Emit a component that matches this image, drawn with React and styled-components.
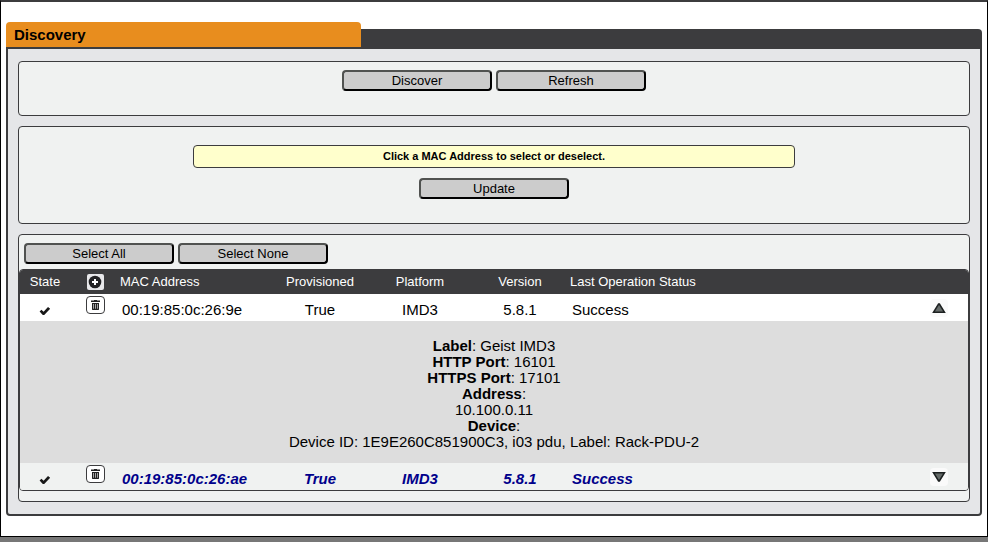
import React, { useState } from "react";
import styled, { createGlobalStyle } from "styled-components";

const ink = "#3c3c3e";

const GlobalStyle = createGlobalStyle`
  *, *::before, *::after { box-sizing: border-box; }
  body {
    margin: 0;
    background: #777;
    color: #000;
    font-family: "Liberation Sans", Arial, Helvetica, sans-serif;
    font-size: 15px;
    line-height: 16px;
  }
`;

const Page = styled.div`
  padding: 20px 5px;
  background: #fff;
  border: 1px solid #000;
  border-top: 2px solid ${ink};
`;

const PanelHeader = styled.header`
  display: flex;
  align-items: flex-end;
`;

const PanelTitle = styled.h1`
  flex: 0 0 355px;
  margin: 0;
  padding: 5px 8px 4px;
  background: #e88d1e;
  border-radius: 4px 4px 0 0;
  font-size: 15px;
  line-height: 16px;
  font-weight: bold;
`;

const PanelBar = styled.div`
  flex: 1;
  height: 18px;
  background: ${ink};
  border-top-right-radius: 4px;
`;

const PanelBody = styled.main`
  display: flex;
  flex-direction: column;
  gap: 10px;
  padding: 12px 10px;
  background: #e5e6e8;
  border: 2px solid ${ink};
  border-radius: 0 0 4px 4px;
`;

const Card = styled.section`
  display: flex;
  flex-direction: column;
  align-items: center;
  gap: 10px;
  padding: ${(p) => p.$top}px 0 24px;
  background: #f0f2f1;
  border: 1px solid ${ink};
  border-radius: 4px;
`;

const TableCard = styled(Card)`
  align-items: stretch;
  gap: 5px;
  padding-bottom: 10px;
`;

const Toolbar = styled.div`
  display: flex;
  gap: 4px;
  padding: 0 5px;
`;

const ActionButton = styled.button`
  width: 150px;
  height: 21px;
  padding: 0;
  background: #ccc;
  border: 2px solid;
  border-color: #505250 #000 #000 #505250;
  border-radius: 4px;
  color: #000;
  font: 13px/16px "Liberation Sans", Arial, sans-serif;
  cursor: pointer;
`;

const Hint = styled.p`
  width: 602px;
  max-width: 100%;
  margin: 0;
  padding: 3px 8px 4px;
  background: #ffffcc;
  border: 1px solid ${ink};
  border-radius: 4px;
  font-size: 11px;
  line-height: 14px;
  font-weight: bold;
  text-align: center;
`;

const TableFrame = styled.div`
  overflow: hidden;
  border: 1px solid ${ink};
  border-radius: 4px;
`;

const Table = styled.table`
  width: 100%;
  table-layout: fixed;
  border-collapse: collapse;
`;

const Column = styled.col`
  width: ${(p) => (p.$width ? `${p.$width}px` : "auto")};
`;

const HeadCell = styled.th`
  height: 24px;
  padding: 0;
  background: ${ink};
  color: #fff;
  font-size: 13px;
  line-height: 16px;
  font-weight: normal;
  text-align: ${(p) => (p.$left ? "left" : "center")};
  vertical-align: middle;
`;

const DeviceRow = styled.tr`
  background: ${(p) => (p.$selected ? "#f0f2f1" : "#fff")};
  color: ${(p) => (p.$selected ? "#00008b" : "#000")};
  font-style: ${(p) => (p.$selected ? "italic" : "normal")};
  font-weight: ${(p) => (p.$selected ? "bold" : "normal")};
`;

const Cell = styled.td`
  height: 27px;
  padding: 8px 0 3px ${(p) => (p.$left ? 2 : 0)}px;
  text-align: ${(p) => (p.$left ? "left" : "center")};
  vertical-align: top;
`;

const IconCell = styled(Cell)`
  padding: ${(p) => p.$top}px 0 0;
`;

const MacButton = styled.button`
  display: block;
  padding: 0;
  background: none;
  border: 0;
  color: inherit;
  font: inherit;
  cursor: pointer;
`;

const IconButton = styled.button`
  display: flex;
  align-items: center;
  justify-content: center;
  width: ${(p) => p.$width || 18}px;
  height: 18px;
  margin: 0 auto;
  padding: 0;
  background: ${(p) => p.$bg};
  border: ${(p) => (p.$outlined ? `1px solid ${ink}` : "0")};
  border-radius: 4px;
  cursor: pointer;
`;

const AddButton = styled(IconButton)`
  height: 16px;
  border-radius: 2px;
`;

const Glyph = styled.svg`
  display: block;
`;

const CheckGlyph = styled(Glyph)`
  margin: 0 auto;
`;

const DetailCell = styled.td`
  padding: 17px 8px 13px;
  background: #ddd;
  text-align: center;
`;

const DetailLine = styled.div`
  line-height: 16px;
`;

const CheckIcon = () => (
  <CheckGlyph width="12" height="10" viewBox="0 0 12 10" aria-label="Ready">
    <path d="M0.6 5.4 L2.4 3.8 L4.6 5.8 L9 0.9 L11.2 2.7 L5.2 8.9 L3.8 8.9 Z" fill="#181818" />
  </CheckGlyph>
);

const PlusIcon = () => (
  <Glyph width="14" height="14" viewBox="0 0 14 14">
    <circle cx="7" cy="7" r="6.3" fill="#222224" />
    <path d="M6 4h2v2h2v2H8v2H6V8H4V6h2z" fill="#fff" />
  </Glyph>
);

const TrashIcon = () => (
  <Glyph width="9" height="12" viewBox="0 0 9 12">
    <path d="M3 1.5V1h3v0.5h3V3H0V1.5z" fill="#222" />
    <path
      fillRule="evenodd"
      d="M1 4h7v6.5L7.5 11h-6L1 10.5zM2.4 5v4.8h0.6V5zM4.2 5v4.8h0.6V5zM6 5v4.8h0.6V5z"
      fill="#222"
    />
  </Glyph>
);

const ArrowIcon = ({ up }) => (
  <Glyph width="16" height="14" viewBox="0 0 16 14">
    <path
      d={up ? "M7.6 3h0.8L13.4 11.2H2.6z" : "M2.6 2.8h10.8L8.4 11H7.6z"}
      fill="#646a68"
      stroke="#1c2020"
      strokeWidth="1.6"
      strokeLinejoin="miter"
    />
  </Glyph>
);

const columns = [50, 50, 150, 100, 100, 100, null, 58];

const devices = [
  {
    mac: "00:19:85:0c:26:9e",
    details: [
      ["Label", " Geist IMD3"],
      ["HTTP Port", " 16101"],
      ["HTTPS Port", " 17101"],
      ["Address", ""],
      [null, "10.100.0.11"],
      ["Device", ""],
      [null, "Device ID: 1E9E260C851900C3, i03 pdu, Label: Rack-PDU-2"],
    ],
  },
  {
    mac: "00:19:85:0c:26:ae",
    details: [["Label", " Geist IMD3"]],
  },
];

function Device({ device, selected, expanded, onSelect, onExpand }) {
  return (
    <>
      <DeviceRow $selected={selected}>
        <IconCell $top={12}><CheckIcon /></IconCell>
        <IconCell $top={2}>
          <IconButton $outlined $bg="#fff" $width={19} aria-label={`Delete ${device.mac}`}>
            <TrashIcon />
          </IconButton>
        </IconCell>
        <Cell $left>
          <MacButton aria-pressed={selected} onClick={onSelect}>{device.mac}</MacButton>
        </Cell>
        <Cell>True</Cell>
        <Cell>IMD3</Cell>
        <Cell>5.8.1</Cell>
        <Cell $left>Success</Cell>
        <IconCell $top={5}>
          <IconButton $bg="#fafafa" aria-expanded={expanded} aria-label="Details" onClick={onExpand}>
            <ArrowIcon up={expanded} />
          </IconButton>
        </IconCell>
      </DeviceRow>
      {expanded && (
        <tr>
          <DetailCell colSpan={8}>
            {device.details.map(([name, value]) => (
              <DetailLine key={name || value}>
                {name && <b>{name}</b>}
                {name && ":"}
                {value}
              </DetailLine>
            ))}
          </DetailCell>
        </tr>
      )}
    </>
  );
}

export default function App() {
  const [selected, setSelected] = useState([devices[1].mac]);
  const [expanded, setExpanded] = useState([devices[0].mac]);
  const toggle = (list, mac) =>
    list.includes(mac) ? list.filter((item) => item !== mac) : [...list, mac];

  return (
    <>
      <GlobalStyle />
      <Page>
        <PanelHeader>
          <PanelTitle>Discovery</PanelTitle>
          <PanelBar />
        </PanelHeader>
        <PanelBody>
          <Card $top={8}>
            <Toolbar>
              <ActionButton>Discover</ActionButton>
              <ActionButton>Refresh</ActionButton>
            </Toolbar>
          </Card>
          <Card $top={18}>
            <Hint>Click a MAC Address to select or deselect.</Hint>
            <ActionButton>Update</ActionButton>
          </Card>
          <TableCard $top={8}>
            <Toolbar>
              <ActionButton onClick={() => setSelected(devices.map((d) => d.mac))}>Select All</ActionButton>
              <ActionButton onClick={() => setSelected([])}>Select None</ActionButton>
            </Toolbar>
            <TableFrame>
              <Table>
                <colgroup>
                  {columns.map((width, i) => <Column key={i} $width={width} />)}
                </colgroup>
                <thead>
                  <tr>
                    <HeadCell>State</HeadCell>
                    <HeadCell>
                      <AddButton $bg="#e8e8ea" $width={17} aria-label="Add device"><PlusIcon /></AddButton>
                    </HeadCell>
                    <HeadCell $left>MAC Address</HeadCell>
                    <HeadCell>Provisioned</HeadCell>
                    <HeadCell>Platform</HeadCell>
                    <HeadCell>Version</HeadCell>
                    <HeadCell $left>Last Operation Status</HeadCell>
                    <HeadCell aria-label="Details" />
                  </tr>
                </thead>
                <tbody>
                  {devices.map((device) => (
                    <Device
                      key={device.mac}
                      device={device}
                      selected={selected.includes(device.mac)}
                      expanded={expanded.includes(device.mac)}
                      onSelect={() => setSelected((list) => toggle(list, device.mac))}
                      onExpand={() => setExpanded((list) => toggle(list, device.mac))}
                    />
                  ))}
                </tbody>
              </Table>
            </TableFrame>
          </TableCard>
        </PanelBody>
      </Page>
    </>
  );
}
